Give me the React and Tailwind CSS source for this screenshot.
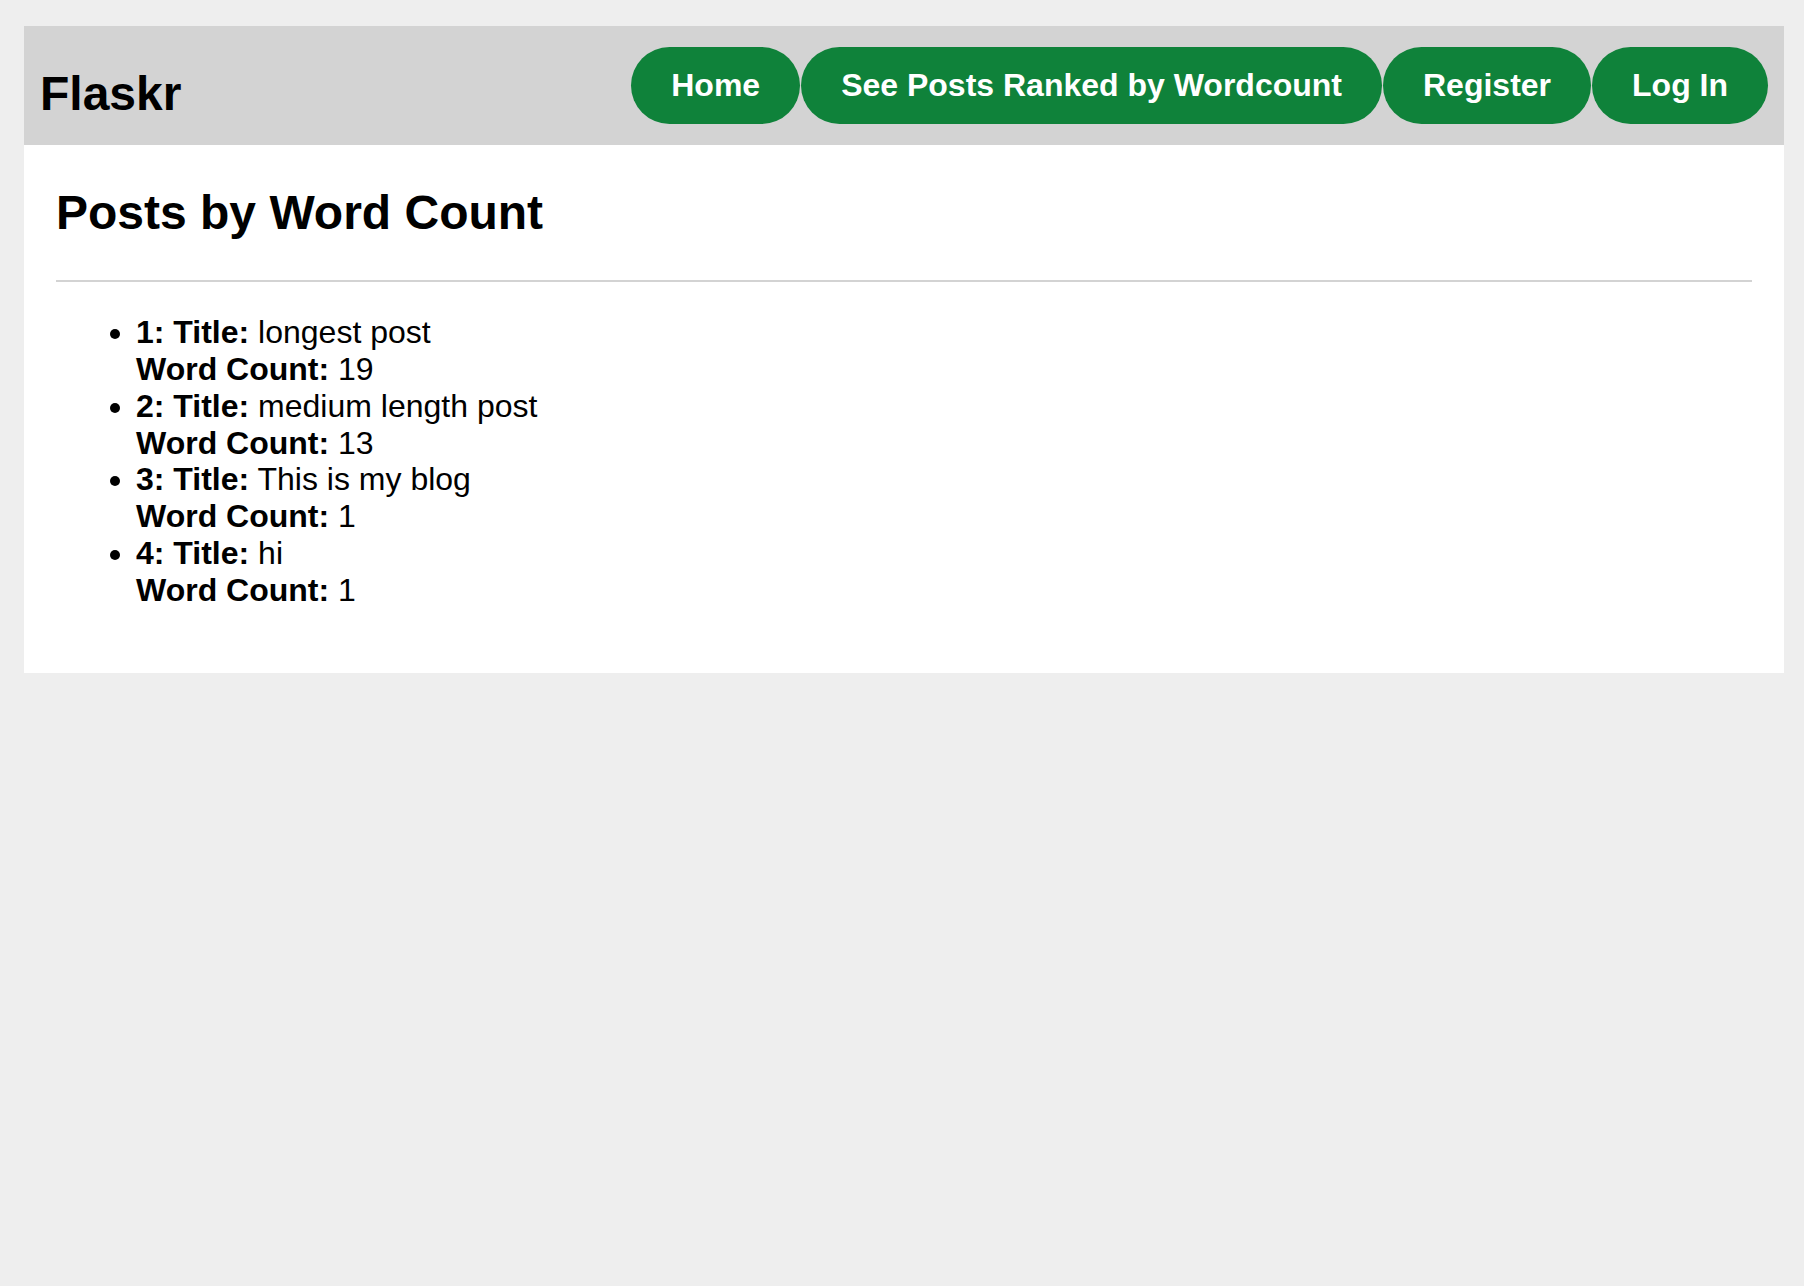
const posts = [
  { title: 'longest post', count: 19 },
  { title: 'medium length post', count: 13 },
  { title: 'This is my blog', count: 1 },
  { title: 'hi', count: 1 },
]

const links = ['Home', 'See Posts Ranked by Wordcount', 'Register', 'Log In']

export default function App() {
  return (
    <div className="min-h-screen bg-[#eeeeee] pt-[26px] pb-6 text-black font-['Liberation_Sans',Arial,sans-serif]">
      <div className="ml-[24px] mr-[20px] bg-white">
        <nav className="h-[119px] px-4 flex items-center bg-[#d3d3d3]">
          <h1 className="flex-auto mt-4 text-[48px] leading-[1.15] font-bold">Flaskr</h1>
          <ul className="flex gap-px">
            {links.map((l) => (
              <li key={l}>
                <a
                  href="#"
                  className="block px-10 py-5 rounded-full bg-[#0f823a] text-white text-[32px] leading-[1.15] font-bold"
                >
                  {l}
                </a>
              </li>
            ))}
          </ul>
        </nav>

        <section className="px-8 pb-8">
          <header className="border-b-2 border-[#d3d3d3]">
            <h1 className="py-10 text-[48px] leading-[1.15] font-bold">Posts by Word Count</h1>
          </header>
          <ul className="my-8 pl-[80px] list-disc text-[32px] leading-[1.15]">
            {posts.map((p, i) => (
              <li key={i}>
                <b>{i + 1}: Title:</b> {p.title}
                <br />
                <b>Word Count:</b> {p.count}
              </li>
            ))}
          </ul>
        </section>
      </div>
    </div>
  )
}
